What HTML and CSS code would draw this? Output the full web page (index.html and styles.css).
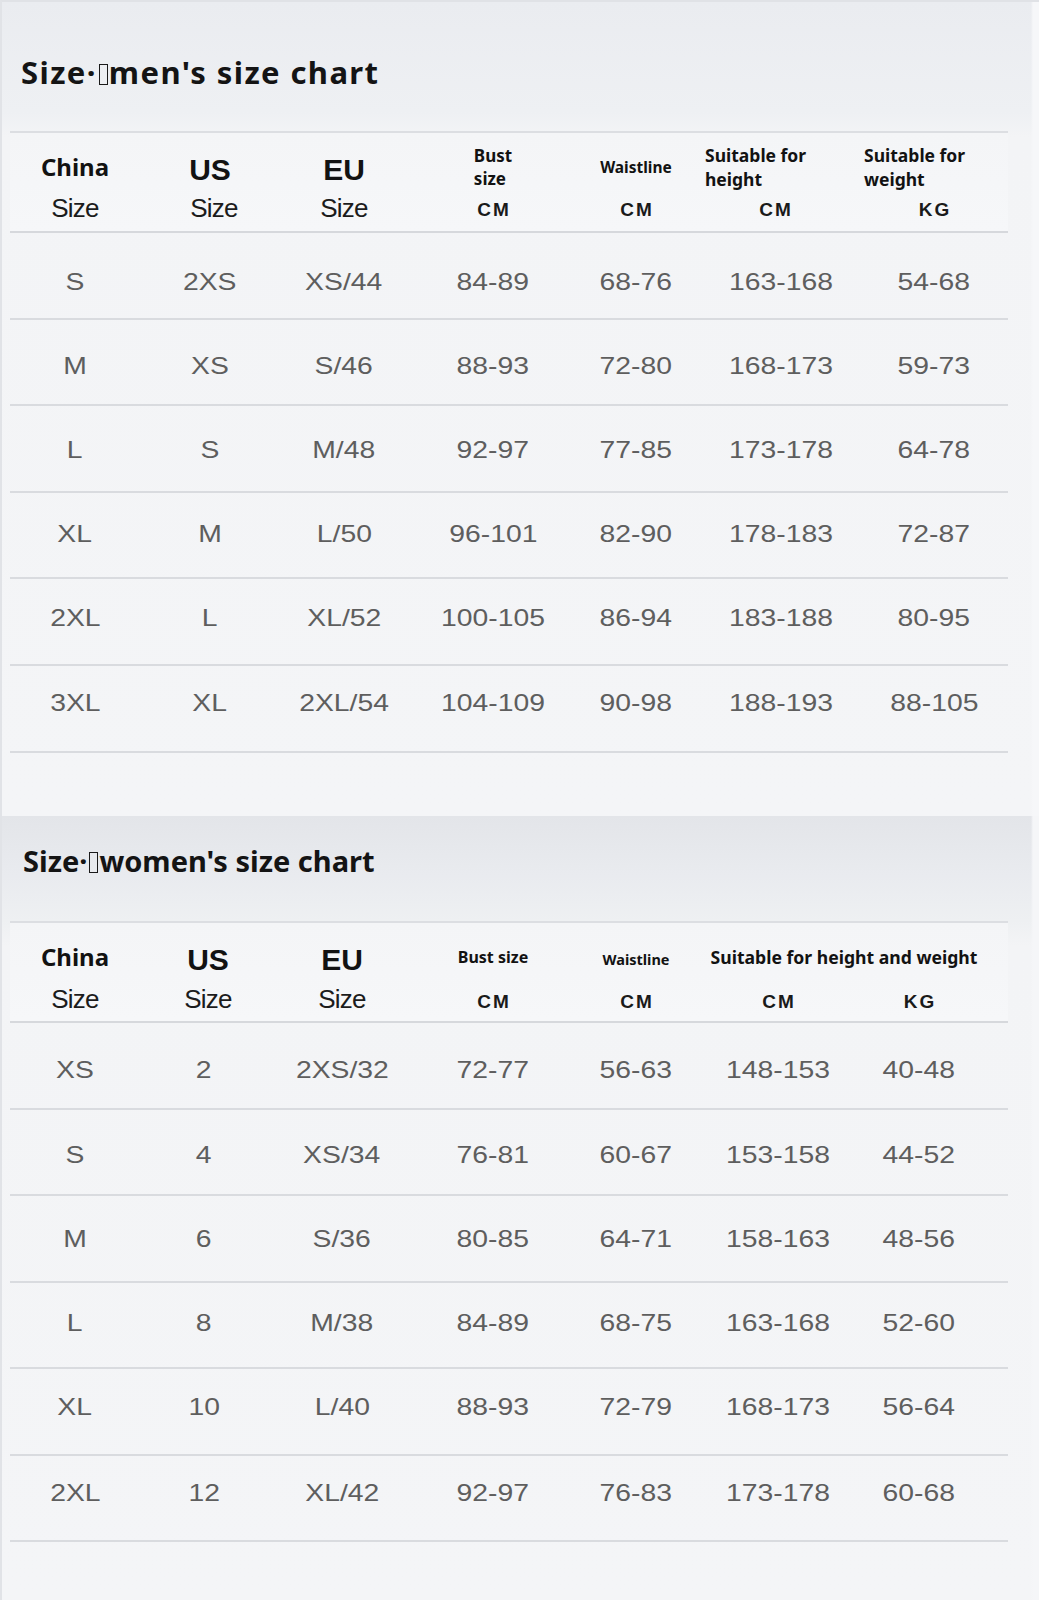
FILE: index.html
```html
<!DOCTYPE html>
<html lang="en">
<head>
<meta charset="utf-8">
<title>Size chart</title>
<link rel="stylesheet" href="styles.css">
</head>
<body>
<main class="page">
  <section class="chart chart-men">
    <h2 class="title">Size·<span class="tofu"></span>men's size chart</h2>
    <div class="table">
      <div class="head">
        <div class="lbl c1 china">China</div>
        <div class="lbl c2 big">US</div>
        <div class="lbl c3 big">EU</div>
        <div class="lbl c4 small">Bust<br>size</div>
        <div class="lbl c5 tiny">Waistline</div>
        <div class="lbl c6 small wide left">Suitable for<br>height</div>
        <div class="lbl c7 small wide left shift">Suitable for<br>weight</div>
        <div class="unit-size c1">Size</div>
        <div class="unit-size c2 us">Size</div>
        <div class="unit-size c3">Size</div>
        <div class="unit c4">CM</div>
        <div class="unit c5">CM</div>
        <div class="unit c6 nudge">CM</div>
        <div class="unit c7">KG</div>
      </div>
      <div class="row"><span>S</span><span>2XS</span><span>XS/44</span><span>84-89</span><span>68-76</span><span>163-168</span><span>54-68</span></div>
      <div class="row"><span>M</span><span>XS</span><span>S/46</span><span>88-93</span><span>72-80</span><span>168-173</span><span>59-73</span></div>
      <div class="row"><span>L</span><span>S</span><span>M/48</span><span>92-97</span><span>77-85</span><span>173-178</span><span>64-78</span></div>
      <div class="row"><span>XL</span><span>M</span><span>L/50</span><span>96-101</span><span>82-90</span><span>178-183</span><span>72-87</span></div>
      <div class="row"><span>2XL</span><span>L</span><span>XL/52</span><span>100-105</span><span>86-94</span><span>183-188</span><span>80-95</span></div>
      <div class="row"><span>3XL</span><span>XL</span><span>2XL/54</span><span>104-109</span><span>90-98</span><span>188-193</span><span>88-105</span></div>
    </div>
  </section>

  <section class="chart chart-women">
    <h2 class="title">Size·<span class="tofu"></span>women's size chart</h2>
    <div class="table">
      <div class="head">
        <div class="lbl c1 china">China</div>
        <div class="lbl c2 big us">US</div>
        <div class="lbl c3 big">EU</div>
        <div class="lbl c4 small one">Bust size</div>
        <div class="lbl c5 tiny">Waistline</div>
        <div class="lbl c67 small one">Suitable for height and weight</div>
        <div class="unit-size c1">Size</div>
        <div class="unit-size c2 us">Size</div>
        <div class="unit-size c3">Size</div>
        <div class="unit c4">CM</div>
        <div class="unit c5">CM</div>
        <div class="unit c6">CM</div>
        <div class="unit c7">KG</div>
      </div>
      <div class="row"><span>XS</span><span>2</span><span>2XS/32</span><span>72-77</span><span>56-63</span><span>148-153</span><span>40-48</span></div>
      <div class="row"><span>S</span><span>4</span><span>XS/34</span><span>76-81</span><span>60-67</span><span>153-158</span><span>44-52</span></div>
      <div class="row"><span>M</span><span>6</span><span>S/36</span><span>80-85</span><span>64-71</span><span>158-163</span><span>48-56</span></div>
      <div class="row"><span>L</span><span>8</span><span>M/38</span><span>84-89</span><span>68-75</span><span>163-168</span><span>52-60</span></div>
      <div class="row"><span>XL</span><span>10</span><span>L/40</span><span>88-93</span><span>72-79</span><span>168-173</span><span>56-64</span></div>
      <div class="row"><span>2XL</span><span>12</span><span>XL/42</span><span>92-97</span><span>76-83</span><span>173-178</span><span>60-68</span></div>
    </div>
  </section>
</main>
</body>
</html>
```

FILE: styles.css
```css
* { box-sizing: border-box; }

html, body {
  margin: 0;
  padding: 0;
}

body {
  background: #eef0f3;
  color: #111;
  font-family: "Liberation Sans", Arial, sans-serif;
}

.page {
  width: 1039px;
}

.chart {
  position: relative;
  border-left: 2px solid #e1e3e7;
}

.chart-men {
  height: 816px;
  padding-top: 50px;
  border-top: 2px solid #e0e2e6;
  background:
    linear-gradient(90deg, rgba(255,255,255,0) 0, rgba(255,255,255,0) 1029px, #f6f7f9 1031px),
    linear-gradient(180deg, #eaecf0 0, #eef0f3 110px, #f3f4f6 135px, #f4f5f7 100%);
}

.chart-women {
  height: 784px;
  padding-top: 25px;
  background:
    linear-gradient(90deg, rgba(255,255,255,0) 0, rgba(255,255,255,0) 1029px, #f5f6f8 1031px),
    linear-gradient(180deg, #e3e5e9 0, #e9ebef 60px, #eef0f2 105px, #f3f4f6 130px, #f4f5f7 100%);
}

.title {
  margin: 0 0 39px 19px;
  height: 40px;
  font-family: "Noto Sans", "Open Sans", sans-serif;
  font-weight: 700;
  font-size: 31px;
  line-height: 40px;
  letter-spacing: 1.4px;
  color: #141414;
  white-space: nowrap;
}

.chart-women .title {
  margin: 0 0 40px 21px;
  font-size: 29px;
  letter-spacing: 0;
}

.tofu {
  display: inline-block;
  width: 9px;
  height: 21px;
  margin: 0 1px 0 2px;
  border: 1.5px solid #1a1a1a;
  vertical-align: -1px;
}

.table {
  width: 998px;
  margin-left: 8px;
}

.head,
.row {
  display: grid;
  grid-template-columns: 130px 140px 128px 170px 116px 174px 132px;
}

.chart-women .head,
.chart-women .row {
  grid-template-columns: 130px 128px 148px 154px 132px 152px 130px;
}

.head {
  height: 102px;
  padding-top: 9px;
  grid-template-rows: 50px 1fr;
  border-top: 2px solid #dcdee2;
  border-bottom: 2px solid #d6d8dc;
  background: linear-gradient(180deg, #f4f5f7, #f6f7f9);
}

.c1 { grid-column: 1; }
.c2 { grid-column: 2; }
.c3 { grid-column: 3; }
.c4 { grid-column: 4; }
.c5 { grid-column: 5; }
.c6 { grid-column: 6; }
.c7 { grid-column: 7; }
.c67 { grid-column: 6 / 8; }

.lbl {
  grid-row: 1;
  align-self: center;
  justify-self: center;
  text-align: center;
  color: #121212;
}

.china {
  font-family: "Noto Sans", "Open Sans", sans-serif;
  font-weight: 700;
  font-size: 24px;
  line-height: 30px;
}

.big {
  font-weight: 700;
  font-size: 30px;
  line-height: 34px;
  margin-top: 6px;
}

.us { margin-left: 8px; }

.small {
  font-family: "Noto Sans", "Open Sans", sans-serif;
  font-weight: 700;
  font-size: 17px;
  line-height: 23px;
  text-align: left;
}

.chart-women .small.one {
  font-size: 16px;
  line-height: 22px;
}

.chart-women .small.one.c67 {
  font-size: 17.6px;
  margin-left: 2px;
}

.wide {
  font-size: 17.5px;
  line-height: 24px;
}

.left {
  justify-self: start;
  margin-left: 11px;
}

.shift {
  margin-left: -4px;
}

.tiny {
  font-family: "Noto Sans", "Open Sans", sans-serif;
  font-weight: 700;
  font-size: 15.5px;
  line-height: 22px;
}

.chart-women .tiny {
  font-size: 14.5px;
  margin-top: 4px;
}

.unit-size {
  grid-row: 2;
  justify-self: center;
  align-self: start;
  margin-top: 4px;
  font-size: 26px;
  line-height: 24px;
  letter-spacing: -0.8px;
  color: #1c1c1c;
}

.chart-women .unit-size {
  margin-top: 5px;
}

.unit {
  grid-row: 2;
  justify-self: center;
  align-self: start;
  margin-top: 6px;
  padding-left: 2px;
  font-weight: 700;
  font-size: 19px;
  line-height: 24px;
  letter-spacing: 2px;
  color: #1a1a1a;
}

.chart-women .unit {
  margin-top: 8px;
}

.nudge { margin-left: -12px; }

.row {
  height: 86.6px;
  border-bottom: 2px solid #d9dbdf;
  align-items: start;
}

.chart-women .row {
  height: 86.5px;
}

.row span {
  justify-self: center;
  display: inline-block;
  font-size: 24px;
  line-height: 24px;
  color: #5e5e5e;
  transform: scaleX(1.18);
  white-space: nowrap;
}

.chart-men .row:nth-of-type(2) { padding-top: 37px; }
.chart-men .row:nth-of-type(3) { padding-top: 34px; }
.chart-men .row:nth-of-type(4) { padding-top: 32px; }
.chart-men .row:nth-of-type(5) { padding-top: 29px; }
.chart-men .row:nth-of-type(6) { padding-top: 27px; }
.chart-men .row:nth-of-type(7) { padding-top: 25px; }

.chart-women .row:nth-of-type(2) { padding-top: 35px; }
.chart-women .row:nth-of-type(3) { padding-top: 33px; }
.chart-women .row:nth-of-type(4) { padding-top: 31px; }
.chart-women .row:nth-of-type(5) { padding-top: 28px; }
.chart-women .row:nth-of-type(6) { padding-top: 26px; }
.chart-women .row:nth-of-type(7) { padding-top: 25px; }
```
